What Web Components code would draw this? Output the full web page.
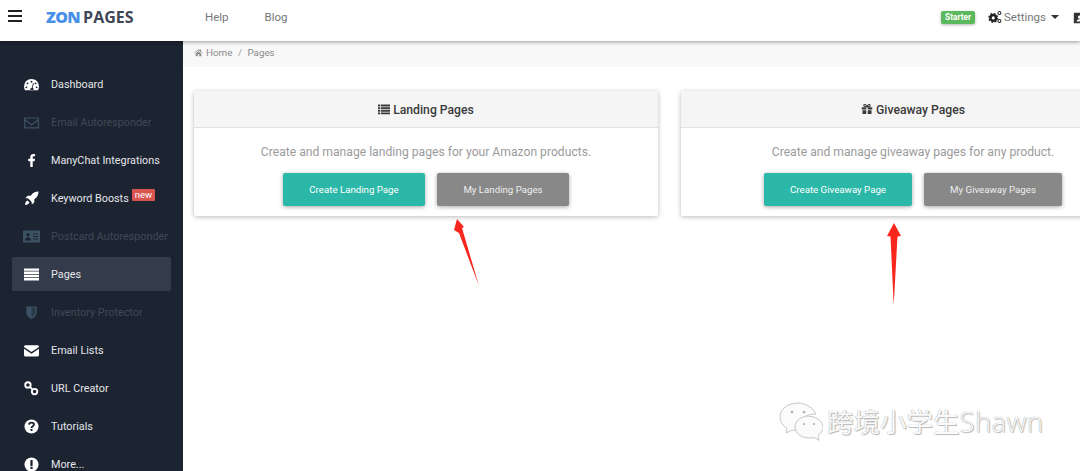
<!DOCTYPE html>
<html lang="en"><head><meta charset="utf-8"><title>Pages</title>
<style>
html,body{margin:0;height:471px;overflow:hidden;background:#fff;font-family:Roboto,"Liberation Sans",sans-serif}
</style></head><body>
<app-shell>
  <app-topbar slot="top"></app-topbar>
  <side-nav slot="side">
    <nav-item icon="dash">Dashboard</nav-item>
    <nav-item icon="mail-o" disabled>Email Autoresponder</nav-item>
    <nav-item icon="fb">ManyChat Integrations</nav-item>
    <nav-item icon="rocket" badge="new">Keyword Boosts</nav-item>
    <nav-item icon="card" disabled>Postcard Autoresponder</nav-item>
    <nav-item icon="list" active>Pages</nav-item>
    <nav-item icon="shield" disabled>Inventory Protector</nav-item>
    <nav-item icon="mail">Email Lists</nav-item>
    <nav-item icon="link">URL Creator</nav-item>
    <nav-item icon="help">Tutorials</nav-item>
    <nav-item icon="warn">More...</nav-item>
  </side-nav>
  <bread-crumb slot="main"></bread-crumb>
  <card-row slot="main">
    <page-card icon="list" title="Landing Pages" text="Create and manage landing pages for your Amazon products." primary="Create Landing Page" secondary="My Landing Pages" pw="142" sw="132"></page-card>
    <page-card icon="gift" title="Giveaway Pages" text="Create and manage giveaway pages for any product." primary="Create Giveaway Page" secondary="My Giveaway Pages" pw="148" sw="138"></page-card>
  </card-row>
  <red-arrow slot="over" style="left:448px;top:216px" points="9,3 16,11 14,12 31,70 11,17 6,14"></red-arrow>
  <red-arrow slot="over" style="left:884px;top:221px" points="10,2 17,15 13.500,15.500 9.700,84 6.500,15.500 3,15"></red-arrow>
  <water-mark slot="over"></water-mark>
</app-shell>
<script>
const ICONS={
dash:'<path fill="currentColor" fill-rule="evenodd" d="M8 2a8 8 0 0 0-8 8c0 1.500.4 2.900 1.100 4h13.800A8 8 0 0 0 16 10a8 8 0 0 0-8-8zM8 4a1 1 0 1 1 0 2 1 1 0 0 1 0-2zM3.700 5.800a1 1 0 1 1 0 2 1 1 0 0 1 0-2zM12.300 5.800a1 1 0 1 1 0 2 1 1 0 0 1 0-2zM2.500 10a1 1 0 1 1 0 2 1 1 0 0 1 0-2zM13.500 10a1 1 0 1 1 0 2 1 1 0 0 1 0-2zM9.600 6.500l.9.300-1.300 4.700a1.700 1.700 0 1 1-2.400 1.100 1.700 1.700 0 0 1 1.500-1z"/>',
'mail-o':'<path fill="none" stroke="currentColor" stroke-width="1.300" d="M.7 3.200h14.600v10.600H.7zM.7 5l7.300 5.300L15.300 5"/>',
mail:'<path fill="currentColor" d="M0 4.200C0 3 .8 2.500 1.600 2.500h12.800c.8 0 1.600.6 1.600 1.700L8 9.700zM0 6l8 5.500L16 6v6.800c0 .9-.7 1.700-1.600 1.700H1.600C.7 14.500 0 13.700 0 12.800z"/>',
fb:'<path fill="currentColor" d="M9.300 15V8.700h2l.4-2.500H9.300V4.800c0-.8.300-1.300 1.300-1.300h1.200V1.200C11.500 1.100 10.800 1 10 1 8 1 6.700 2.200 6.700 4.400v1.800H4.500v2.500h2.200V15z"/>',
rocket:'<path fill="currentColor" d="M15.500.5c-3.500 0-6.300 1.400-8.300 4.500H4L1.500 7.500l3 .5L8 11.500l.5 3 2.500-2.500V8.800c3.100-2 4.500-4.800 4.500-8.300zM3.800 10.200c-1.300.4-2.300 1.800-2.800 4.800 3-.5 4.400-1.500 4.800-2.800z"/>',
card:'<path fill="currentColor" fill-rule="evenodd" d="M0 2.500h17v12H0zM5 5a1.700 1.700 0 1 0 0 3.400A1.700 1.700 0 0 0 5 5zM2 12.500h6c0-2-1.200-3.300-3-3.300s-3 1.300-3 3.300zM10 5.500v1h5v-1zM10 8v1h5V8zM10 10.500v1h5v-1z"/>',
list:'<path fill="currentColor" d="M0 1.500h16v2.600H0zM0 4.900h16v2.600H0zM0 8.300h16v2.600H0zM0 11.700h16v2.600H0z"/>',
shield:'<path fill="currentColor" d="M2.500 1.500h11V8c0 3.500-3 5.800-5.500 7C5.500 13.800 2.500 11.500 2.500 8z"/><path fill="#1c2331" opacity=".55" d="M8 3v10c-2-1-3.800-2.700-3.800-5V3z" transform="matrix(-1 0 0 1 16 0)"/>',
link:'<g fill="none" stroke="currentColor" stroke-width="2"><circle cx="4.200" cy="4.200" r="2.900"/><circle cx="11.300" cy="11.300" r="2.900"/><path d="M6 6l3.500 3.500"/></g>',
help:'<circle cx="8" cy="8" r="7.500" fill="currentColor"/><path fill="none" stroke="#1c2331" stroke-width="2" d="M5.300 6c.2-1.500 1.300-2.100 2.700-2.100 1.500 0 2.600.8 2.600 2 0 1.800-2.600 1.900-2.600 3.800"/><rect x="6.900" y="10.600" width="2.200" height="2.100" fill="#1c2331"/>',
warn:'<circle cx="8" cy="8" r="7.500" fill="currentColor"/><rect x="6.800" y="3.200" width="2.400" height="6.300" rx=".5" fill="#1c2331"/><rect x="6.800" y="10.400" width="2.400" height="2.300" fill="#1c2331"/>',
home:'<path fill="currentColor" d="M8 2 .5 8.500l1 1L8 4l6.500 5.500 1-1L12.500 6V2.500h-2V4.200zM3 10v4.500h3.700v-3.200h2.600v3.200H13V10L8 5.700z"/>',
'list-s':'<path fill="currentColor" d="M0 2h3v2.500H0zM4 2h12v2.500H4zM0 5.500h3V8H0zM4 5.500h12V8H4zM0 9h3v2.500H0zM4 9h12v2.500H4zM0 12.500h3V15H0zM4 12.500h12V15H4z"/>',
gift:'<path fill="currentColor" d="M1 5.500h6V8.500H1zM9 5.500h6V8.500H9zM2 9.500h5v5H2zM9 9.500h5v5H9z"/><path fill="none" stroke="currentColor" stroke-width="1.500" d="M8 5C6 5 3.800 4.800 3.800 3.200S6.500 1 8 5c1.500-4 4.200-3.400 4.200-1.800S10 5 8 5z"/>',
gears:'<g fill="none" stroke="currentColor"><circle cx="6" cy="9" r="3.200" stroke-width="2.800"/><circle cx="6" cy="9" r="5" stroke-width="1.500" stroke-dasharray="2 1.930"/><circle cx="13" cy="3.500" r="1.700" stroke-width="1.200"/><circle cx="13" cy="12.500" r="1.700" stroke-width="1.200"/></g>',
cal:'<path fill="currentColor" fill-rule="evenodd" d="M1 2h14v13H1zM8 5.500a2 2 0 1 0 0 4 2 2 0 0 0 0-4zM4.500 13h7c0-1.700-1.500-2.800-3.500-2.800S4.500 11.300 4.500 13z"/>'
};
const svg=(n,w=16,vb='0 0 16 16',h)=>`<svg width="${w}" height="${h||w}" viewBox="${vb}" aria-hidden="true">${ICONS[n]||''}</svg>`;
function def(name,css,html,init){
  customElements.define(name,class extends HTMLElement{
    connectedCallback(){
      if(this.shadowRoot)return;
      const s=this.attachShadow({mode:'open'});
      s.innerHTML=`<style>${css}</style>`+(typeof html==='function'?html(this):html);
      if(init)init(this,s);
    }
  });
}
def('app-shell',`
:host{display:grid;grid-template-columns:183px 1fr;grid-template-rows:41px 430px;width:1080px;height:471px;overflow:hidden;position:relative}
.top{grid-column:1/3;position:relative;z-index:3}
.side{display:block;min-height:0;overflow:hidden}
.main{display:block;min-width:0;overflow:hidden}
`,`<div class="top"><slot name="top"></slot></div><div class="side"><slot name="side"></slot></div><div class="main"><slot name="main"></slot></div><slot name="over"></slot>`);
def('app-topbar',`
:host{display:flex;align-items:center;height:41px;box-sizing:border-box;padding-bottom:7px;background:#fff;box-shadow:0 1px 4px rgba(0,0,0,.38);color:#777;font-size:11.500px}
.burger{margin:-2px 0 0 8px;width:14px;display:flex;flex-direction:column;gap:2.500px}
.burger i{display:block;height:2.500px;background:#222}
.logo{margin-left:24px;width:134px;font:700 16px/1 "Open Sans",Roboto,sans-serif;color:#3f4757;white-space:nowrap}
.logo b{color:#4a90e8;font-weight:800;letter-spacing:-.6px;margin-right:3px}
a{color:#777;font-size:11.500px}
.blog{margin-left:36px}.help{margin-left:25px}
.sp{flex:1}
.tag{background:#5cb85c;color:#fff;font:700 8.300px/1 Roboto,sans-serif;padding:2px 4px 2px;border-radius:2px;box-shadow:0 1px 3px rgba(0,0,0,.3);margin-right:13px;margin-top:1px}
.set{display:flex;align-items:center;gap:2px;font-size:11.500px;color:#777}
.set svg{color:#222}
.car{width:0;height:0;border:4px solid transparent;border-top-color:#333;border-bottom:0;margin-left:5px;margin-right:14px}
.cal{color:#333;display:flex;margin-right:-6px}
`,`<div class="burger"><i></i><i></i><i></i></div><div class="logo"><b>ZON</b>PAGES</div><a class="help">Help</a><a class="blog">Blog</a><div class="sp"></div><span class="tag">Starter</span><span class="set">${svg('gears',14)}<span>Settings</span></span><span class="car"></span><span class="cal">${svg('cal',13)}</span>`);
def('side-nav',`
:host{display:flex;flex-direction:column;gap:4px;box-sizing:border-box;height:430px;padding:26px 12px 0;background:#1c2331;overflow:hidden}
`,`<slot></slot>`);
def('nav-item',`
:host{display:flex;flex:none;align-items:center;height:34px;box-sizing:border-box;padding-left:11px;color:#e4e6ea;font-size:10.800px;border-radius:2px;white-space:nowrap}
:host([active]){background:#343b4a}
:host([disabled]){color:#3f4a59}
.ic{width:17px;display:flex;justify-content:center;margin-right:11px;flex:none;color:#fff}
:host([disabled]) .ic{color:#3c5263}
.b{background:#d9534f;color:#fff;font-size:9.500px;line-height:12px;padding:0 3px;border-radius:1px;margin:-6px 0 0 3px}
`,h=>{const b=h.getAttribute('badge');return `<span class="ic">${svg(h.getAttribute('icon'),h.getAttribute('icon')==='card'?17:15,h.getAttribute('icon')==='card'?'0 0 17 17':'0 0 16 16')}</span><span><slot></slot></span>${b?`<span class="b">${b}</span>`:''}`});
def('bread-crumb',`
:host{display:flex;align-items:center;gap:2px;height:26px;box-sizing:border-box;padding:0 0 4px 11px;background:#f8f8f8;color:#8a8a8a;font-size:9.800px}
svg{margin-right:1px}
.s{margin:0 3.500px 0 3.500px;color:#999}
`,`${svg('home',9)}<span>Home</span><span class="s">/</span><span>Pages</span>`);
def('card-row',`
:host{display:flex;gap:23px;padding:24px 0 0 11px;width:1000px}
`,`<slot></slot>`);
def('page-card',`
:host{display:block;flex:none;width:464px;height:125px;background:#fff;box-shadow:0 1px 5px rgba(0,0,0,.28);border-radius:2px}
.h{height:36px;box-sizing:content-box;background:#f5f5f5;border-bottom:1px solid #e2e2e2;display:flex;align-items:center;justify-content:center;gap:3px;font:500 12.200px Roboto,sans-serif;color:#3a3a3a}
.h span{position:relative;top:.5px}
.p{margin:0;padding-top:17px;height:15px;line-height:15px;text-align:center;font-size:12.150px;color:#9b9b9b}
.bs{display:flex;justify-content:center;gap:12px;margin-top:13px}
.btn{height:33px;display:flex;align-items:center;justify-content:center;color:#fff;font-size:9.700px;border-radius:2px;box-shadow:0 1px 4px rgba(0,0,0,.35)}
.a{background:#2bb8a8}.g{background:#888;color:#eee}
`,h=>{const a=k=>h.getAttribute(k);const ic=a('icon')==='list'?'list-s':'gift';return `<div class="h">${svg(ic,12)}<span>${a('title')}</span></div><p class="p">${a('text')}</p><div class="bs"><div class="btn a" style="width:${a('pw')}px">${a('primary')}</div><div class="btn g" style="width:${a('sw')}px">${a('secondary')}</div></div>`});
def('red-arrow',`
:host{position:absolute;display:block}
polygon{fill:#f8261c}
svg{display:block}
`,h=>`<svg width="34" height="88" viewBox="0 0 34 88"><polygon points="${h.getAttribute('points')}"/></svg>`);
def('water-mark',`
:host{position:absolute;left:779px;top:401px;display:flex;align-items:center;gap:4px;opacity:.95}
span{font:400 26.500px/1 "Noto Sans CJK SC",sans-serif;color:#fbfbfb;text-shadow:0 0 1px #888,1px 1px 1px #bbb;white-space:nowrap}
.s{font-family:"Open Sans",sans-serif;font-weight:300;font-size:27.500px;letter-spacing:.4px}
`,`<svg width="44" height="42" viewBox="0 0 44 42"><g fill="#fbfbfb" stroke="#c4c4c4" stroke-width="1"><path d="M19 2C9 2 1 8 1 16c0 5 3 9 7 11l-1 5 6-3c2 .5 4 .7 6 .6C18 20 25 13 37 13 34 7 27 2 19 2z"/><path d="M30 15c-8 0-14 5-14 11s6 11 14 11c2 0 3 0 5-.6l5 3-1-5c3-2 5-5 5-8 0-6-6-11-14-11z"/></g><g fill="#aaa"><circle cx="13" cy="11" r="1.300"/><circle cx="25" cy="11" r="1.300"/><circle cx="25" cy="23" r="1.100"/><circle cx="35" cy="23" r="1.100"/></g></svg><span>跨境小学生<span class="s">Shawn</span></span>`);
</script>
</body></html>
